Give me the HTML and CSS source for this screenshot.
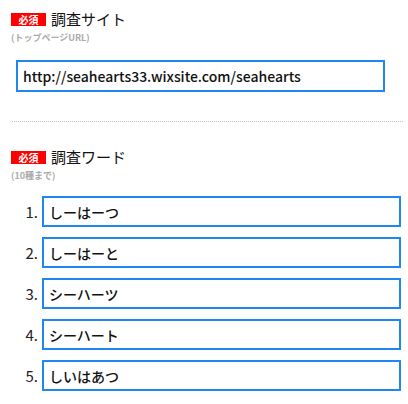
FILE: index.html
```html
<!DOCTYPE html>
<html>
	<head>
		<meta charset="UTF-8">
		<title>調査</title>
		<link rel="stylesheet" href="styles.css">
	</head>
	<body>
		<form id="box">
			<div class="section">
				<div class="head"><em class="badge">必須</em><h2>調査サイト</h2></div>
				<p class="note">(トップページURL)</p>
				<input type="text" class="url" value="http://seahearts33.wixsite.com/seahearts">
			</div>
			<div class="line"></div>
			<div class="section">
				<div class="head"><em class="badge">必須</em><h2>調査ワード</h2></div>
				<p class="note">(10種まで)</p>
				<ul class="words">
					<li><span>1.</span><input type="text" value="しーはーつ"></li>
					<li><span>2.</span><input type="text" value="しーはーと"></li>
					<li><span>3.</span><input type="text" value="シーハーツ"></li>
					<li><span>4.</span><input type="text" value="シーハート"></li>
					<li><span>5.</span><input type="text" value="しいはあつ"></li>
				</ul>
			</div>
		</form>
	</body>
</html>
```

FILE: styles.css
```css
*{
	margin:0;
	padding:0;
}
ul,li{
	list-style: none;
}
body{
	background:#fff;
	color:#222;
	font-family:"Noto Sans CJK JP", "Noto Sans", sans-serif;
}
.section{
	padding:9px 0 0 11px;
}
.head{
	display:flex;
	align-items:center;
	gap:5px;
	height:20px;
}
.badge{
	font-style:normal;
	background:#f00;
	color:#fff;
	font-size:10px;
	font-weight:bold;
	width:35px;
	height:13px;
	line-height:13px;
	text-align:center;
}
.head h2{
	font-size:15px;
	font-weight:normal;
	color:#111;
	line-height:20px;
}
.note{
	font-size:9px;
	font-weight:bold;
	color:#aaa;
	line-height:12px;
	margin-top:3px;
}
input{
	box-sizing:border-box;
	border:2px solid #1e88f0;
	outline:none;
	font-family:"Noto Sans CJK JP", "Noto Sans", sans-serif;
	font-size:14px;
	font-weight:500;
	color:#111;
	padding:0 5px;
}
.url{
	width:369px;
	height:32px;
	margin:16px 0 0 5px;
}
.line{
	border-top:1px dotted #c4c4c4;
	margin:29px 5px 0 12px;
}
.section + .line + .section{
	padding-top:25px;
}
.words{
	margin-top:14px;
}
.words li{
	display:flex;
	align-items:center;
	margin-bottom:10px;
}
.words span{
	width:27px;
	margin-right:4px;
	text-align:right;
	font-size:15px;
}
.words input{
	width:359px;
	height:31px;
}
```
